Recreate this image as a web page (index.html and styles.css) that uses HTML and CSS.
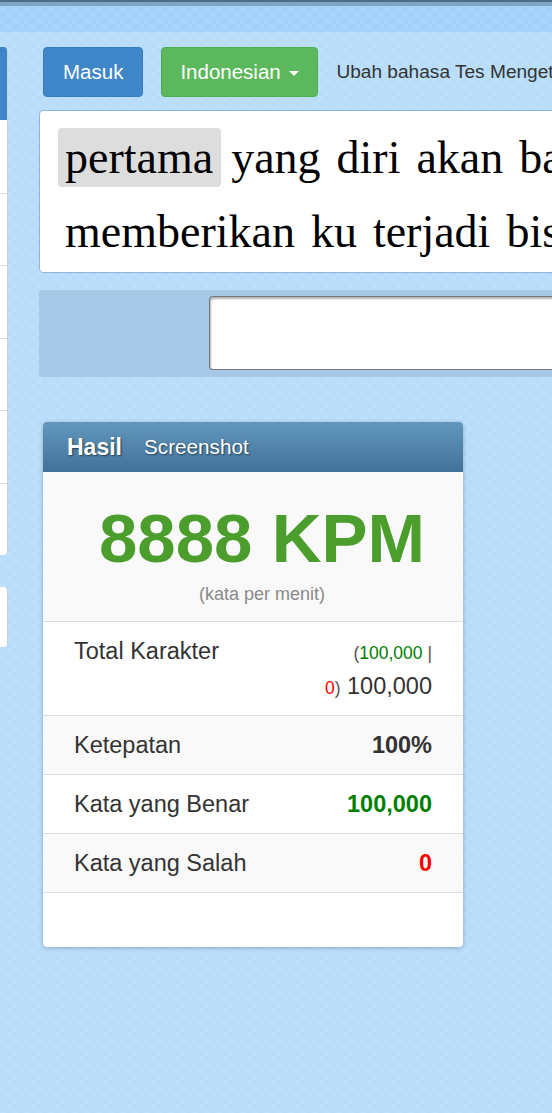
FILE: index.html
```html
<!DOCTYPE html>
<html lang="id">
<head>
<meta charset="utf-8">
<title>Tes Mengetik</title>
<link rel="stylesheet" href="styles.css">
</head>
<body>
<div class="topbar"><div class="topbar-dark"></div><div class="topbar-mid"></div></div>
<div class="page">
  <aside class="sidebar">
    <div class="side-panel">
      <div class="side-head"></div>
      <div class="side-row"></div>
      <div class="side-row"></div>
      <div class="side-row"></div>
      <div class="side-row"></div>
      <div class="side-row"></div>
      <div class="side-row"></div>
    </div>
    <div class="side-panel side-small"></div>
  </aside>
  <main class="main">
    <div class="toolbar">
      <button class="btn btn-blue">Masuk</button>
      <button class="btn btn-green">Indonesian <span class="caret"></span></button>
      <span class="toolbar-text">Ubah bahasa Tes Mengetik</span>
    </div>
    <div class="textbox">
      <div class="line"><span class="current">pertama</span> yang diri akan baru dari saya</div>
      <div class="line">memberikan ku terjadi bisa untuk mereka</div>
    </div>
    <div class="input-row">
      <div class="input-field"></div>
    </div>
    <section class="card">
      <header class="card-head">
        <span class="card-title">Hasil</span>
        <span class="card-tab">Screenshot</span>
      </header>
      <div class="card-score">
        <div class="kpm">8888 KPM</div>
        <div class="kpm-sub">(kata per menit)</div>
      </div>
      <div class="stat">
        <div class="stat-label">Total Karakter</div>
        <div class="stat-value"><span class="small">(<span class="ok">100,000</span> |</span><br><span class="small"><span class="bad">0</span>)</span> 100,000</div>
      </div>
      <div class="stat alt">
        <div class="stat-label">Ketepatan</div>
        <div class="stat-value bold">100%</div>
      </div>
      <div class="stat">
        <div class="stat-label">Kata yang Benar</div>
        <div class="stat-value bold ok">100,000</div>
      </div>
      <div class="stat alt last">
        <div class="stat-label">Kata yang Salah</div>
        <div class="stat-value bold bad">0</div>
      </div>
      <div class="card-foot"></div>
    </section>
  </main>
</div>
</body>
</html>
```
FILE: styles.css
```css
html, body {
  margin: 0;
  padding: 0;
}
body {
  width: 552px;
  height: 1113px;
  overflow: hidden;
  font-family: "Liberation Sans", Arial, sans-serif;
  color: #333;
  background-color: #bbdefb;
  background-image: repeating-conic-gradient(#bcdffc 0 25%, #b8dcfa 0 50%);
  background-size: 12px 12px;
}
.topbar {
  height: 32px;
  background-color: #a6d2fa;
  background-image: repeating-conic-gradient(#a8d3fb 0 25%, #a3d0f9 0 50%);
  background-size: 12px 12px;
}
.topbar-dark {
  height: 2px;
  background: #4f6b86;
}
.topbar-mid {
  height: 4px;
  background: #7ea4c6;
}
.page {
  display: flex;
  padding-top: 15px;
}
.sidebar {
  width: 8px;
  flex-shrink: 0;
  margin-right: 31px;
  overflow: hidden;
}
.side-panel {
  width: 7px;
  background: #fff;
  border-right: 1px solid #cfcfcf;
  border-radius: 0 4px 4px 0;
  overflow: hidden;
}
.side-head {
  height: 73px;
  background: #3e86c8;
}
.side-row {
  height: 71.5px;
  border-top: 1px solid #dddddd;
}
.side-head + .side-row {
  border-top: 0;
  height: 72.5px;
}
.side-small {
  margin-top: 32px;
  height: 60px;
}
.main {
  width: 900px;
  flex-shrink: 0;
}
.toolbar {
  display: flex;
  align-items: center;
  gap: 18px;
  padding-left: 4px;
  height: 50px;
}
.btn {
  height: 50px;
  padding: 0 19px;
  font-family: "Liberation Sans", Arial, sans-serif;
  font-size: 20.5px;
  color: #fff;
  border-radius: 4px;
  border: 1px solid transparent;
  cursor: pointer;
}
.btn-blue {
  background: #3f87c9;
  border-color: #3a7dbb;
}
.btn-green {
  background: #5cb85c;
  border-color: #4cae4c;
  padding: 0 18px 0 18px;
}
.caret {
  display: inline-block;
  width: 0;
  height: 0;
  margin-left: 3px;
  vertical-align: middle;
  border-top: 5px solid #fff;
  border-left: 5px solid transparent;
  border-right: 5px solid transparent;
}
.toolbar-text {
  font-size: 19.1px;
  color: #333;
  white-space: nowrap;
  margin-left: 0;
}
.textbox {
  margin-top: 13px;
  height: 151px;
  padding: 10px 25px 0;
  background: #fff;
  border: 1px solid #8db6dc;
  border-radius: 4px;
  font-family: "Liberation Serif", "Times New Roman", serif;
  font-size: 46px;
  line-height: 74px;
  color: #000;
  word-spacing: 4.5px;
  overflow: hidden;
  box-sizing: content-box;
}
.line {
  white-space: nowrap;
}
.current {
  background: #dddddd;
  border-radius: 4px;
  padding: 4px 8px 4px 7px;
  margin-left: -7px;
  margin-right: -6px;
}
.input-row {
  margin-top: 17px;
  height: 74px;
  padding: 6px 0 7px 170px;
  background: #a7c8e6;
  border-radius: 4px;
}
.input-field {
  height: 72px;
  background: #fff;
  border: 1px solid #777;
  border-right: 0;
  border-radius: 4px 0 0 4px;
  box-shadow: inset 1px 2px 2px rgba(0, 0, 0, 0.3);
}
.card {
  margin: 45px 0 0 4px;
  width: 420px;
  background: #fff;
  border-radius: 4px;
  box-shadow: 0 1px 4px rgba(0, 0, 0, 0.25);
  overflow: hidden;
}
.card-head {
  height: 50px;
  display: flex;
  align-items: center;
  gap: 22px;
  padding-left: 24px;
  background: linear-gradient(#6397bd, #41729a);
  color: #fff;
  text-shadow: 1px 1px 2px rgba(0, 0, 0, 0.55);
}
.card-title {
  font-size: 23px;
  font-weight: bold;
}
.card-tab {
  font-size: 20.7px;
}
.card-score {
  background: #f9f9f9;
  padding: 29px 0 14px 18px;
  text-align: center;
}
.kpm {
  font-size: 69px;
  line-height: 76px;
  font-weight: bold;
  color: #4b9e2b;
}
.kpm-sub {
  margin-top: 4px;
  font-size: 18px;
  line-height: 26px;
  color: #8a8a8a;
}
.stat {
  display: flex;
  justify-content: space-between;
  border-top: 1px solid #dddddd;
  padding: 12px 31px 11px;
  font-size: 23.5px;
  line-height: 35px;
  background: #fff;
}
.stat.alt {
  background: #f9f9f9;
}
.stat.last {
  border-bottom: 1px solid #dddddd;
}
.stat-value {
  text-align: right;
  white-space: nowrap;
}
.bold {
  font-weight: bold;
}
.small {
  font-size: 17.5px;
  line-height: 1;
  color: #555;
}
.ok {
  color: #008000;
}
.bad {
  color: #ff0000;
}
.card-foot {
  height: 54px;
}
```
